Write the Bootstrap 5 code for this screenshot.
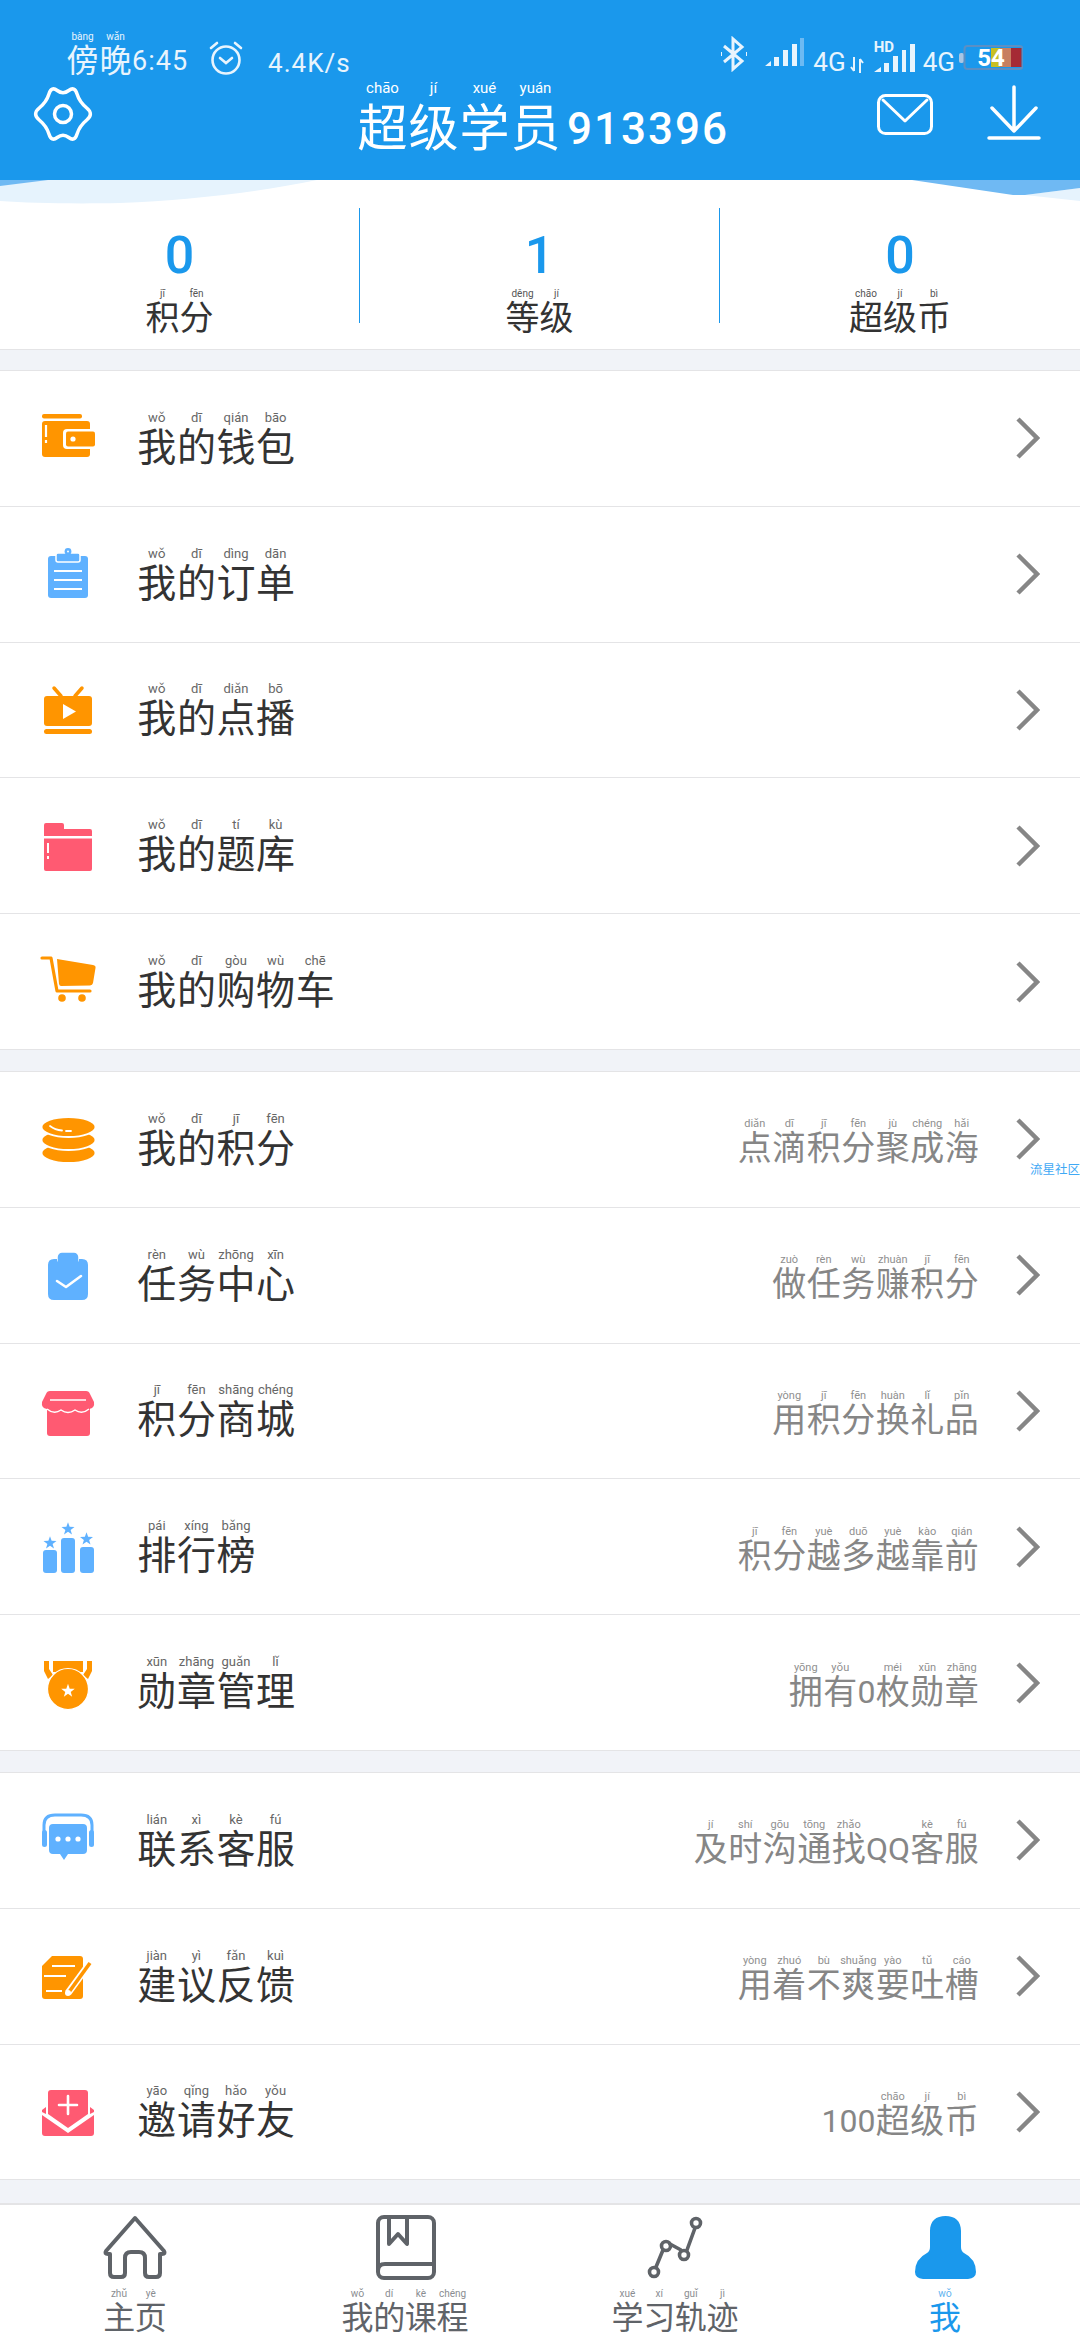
<!DOCTYPE html>
<html lang="zh">
<head>
  <meta charset="utf-8">
  <title>我的</title>
  <link rel="stylesheet" href="https://cdn.jsdelivr.net/npm/bootstrap@5.3.0/dist/css/bootstrap.min.css">
  <style>
    html { height: 2340px; overflow: hidden; }
    body { width: 1080px; height: 2340px; overflow: hidden; background: #f1f3f8; font-family: Roboto, "Noto Sans CJK SC", sans-serif; }

    /* pinyin cell: small reading above one character */
    .zi { display: inline-flex; flex-direction: column; align-items: center; vertical-align: top; }
    .zi-py { white-space: nowrap; font-weight: 400; }
    .zi-ch { display: block; white-space: nowrap; }

    .top-head { height: 180px; background: #1a98ec; color: #fff; }
    .status-line { height: 80px; padding: 32px 57px 0 66px; color: #e8f4fd; }
    .clock .zi { width: 33px; }
    .clock .zi-py { font-size: 10px; line-height: 12px; margin-top: -1px; }
    .clock .zi-ch { font-size: 32px; line-height: 36px; }
    .clock-num { font-size: 27px; letter-spacing: 1px; line-height: 36px; margin-top: 11px; }
    .alarm-ic { margin: 9px 0 0 20px; }
    .net-speed { font-size: 26px; letter-spacing: 1px; margin: 13px 0 0 24px; line-height: 36px; }
    .net-4g { font-size: 26px; line-height: 30px; margin-top: 15px; }
    .net-hd { font-size: 15px; font-weight: 700; line-height: 14px; position: absolute; left: 0; top: 8px; }

    .title-line { height: 100px; }
    .gear-ic { margin: 6px 0 0 33px; }
    .title-box { margin: 3px 0 0 264px; }
    .title-box .zi { width: 51px; }
    .title-box .zi-py { font-size: 15px; line-height: 16px; margin-top: -3px; }
    .title-box .zi-ch { font-size: 50px; line-height: 54px; margin-top: 6px; }
    .title-num { font-size: 44px; font-weight: 500; letter-spacing: 2px; line-height: 54px; margin: 19px 0 0 6px; }
    .mail-ic { margin: 14px 0 0 auto; }
    .down-ic { margin: 5px 39px 0 54px; }

    .stat-box { height: 170px; background: #fff; border-bottom: 1px solid #e4e4e6; padding-top: 28px; margin-bottom: 20px; }
    .wave-ic { position: absolute; left: 0; top: 0; }
    .stat-cell { height: 115px; }
    .stat-line { border-right: 1px solid #1a98ec; }
    .stat-num { color: #1a98ec; font-size: 52px; font-weight: 500; line-height: 66px; padding-top: 15px; }
    .stat-name { color: #333; }
    .stat-name .zi { width: 34px; }
    .stat-name .zi-py { font-size: 10px; line-height: 10px; color: #555; }
    .stat-name .zi-ch { font-size: 34px; line-height: 38px; }

    .menu-group { --bs-list-group-border-color: #e4e4e6; border-top: 1px solid #e4e4e6; margin-bottom: 21px; border-radius: 0; }
    .menu-group:last-child { margin-bottom: 23px; }
    .menu-line { height: 135.8px; padding: 0 40px 0 30px; background: #fff; }
    .menu-group .menu-line:last-child { border-bottom: 1px solid #e4e4e6; }
    .menu-name { color: #333; margin: 2px 0 0 27px; }
    .menu-name .zi { width: 39.6px; }
    .menu-name .zi-py { font-size: 13px; line-height: 14px; color: #666; }
    .menu-name .zi-ch { font-size: 39px; line-height: 40px; margin-top: 3px; }
    .menu-note { color: #868686; margin: 4px 37px 0 auto; }
    .menu-note .zi { width: 34.5px; }
    .menu-note .zi.zi-latin { width: auto; }
    .menu-note .zi-py { font-size: 11px; line-height: 14px; min-height: 14px; color: #8f8f8f; }
    .menu-note .zi-ch { font-size: 34px; line-height: 34px; }
    .menu-note .zi-latin .zi-ch { font-size: 32px; }
    .chev-ic { margin-left: auto; }
    .menu-note + .chev-ic { margin-left: 0; }
    .mark-text { position: absolute; right: 0; top: 90px; font-size: 12.5px; line-height: 16px; color: #3fa9f5; }

    .tab-strip { height: 137px; background: #fff; border-top: 2px solid #e4e4e6; padding-top: 8px; color: #5f6368; }
    .tab-strip .zi { width: 31.7px; }
    .tab-strip .zi-py { font-size: 10px; line-height: 10px; margin-top: 6px; color: #8a8d91; }
    .tab-strip .zi-ch { font-size: 32px; line-height: 38px; }
    .tab-on { color: #1a98ec; }
    .tab-on .zi-py { color: #5fb4ef; }
    .tab-ic { display: block; margin: 0 auto; }
  </style>
</head>
<body>
  <header class="top-head">
    <div class="status-line d-flex align-items-start">
      <div class="clock d-flex align-items-start">
        <span class="zi"><span class="zi-py">bàng</span><span class="zi-ch">傍</span></span><span class="zi"><span class="zi-py">wǎn</span><span class="zi-ch">晚</span></span>
        <span class="clock-num">6:45</span>
      </div>
      <svg class="alarm-ic" width="36" height="34" viewBox="0 0 36 34" fill="none" stroke="#e8f4fd" stroke-width="2.6" stroke-linecap="round">
        <circle cx="18" cy="19" r="13.5"/><path d="M3 7 9 2M33 7 27 2M12 17l6 5 6-5"/>
      </svg>
      <span class="net-speed">4.4K/s</span>
      <div class="d-flex align-items-start ms-auto">
        <svg class="mt-1" width="30" height="36" viewBox="0 0 30 36" fill="none" stroke="#e8f4fd" stroke-width="3"><path d="M5 10 23 25 14 33V3l9 8L5 26"/><path d="M2 18h1M27 18h1" stroke-width="4"/></svg>
        <svg class="ms-3" style="margin-top:5px" width="40" height="30" viewBox="0 0 40 30" fill="#e8f4fd"><path d="M0 29 6 24V29ZM9 20h5v9H9ZM18 13h5v16h-5ZM27 7h5v22h-5Z"/><path d="M35 1h4v28h-4Z" fill="#6cbaf3"/></svg>
        <span class="net-4g ms-2">4G</span>
        <svg class="mt-4 ms-1" width="14" height="18" viewBox="0 0 14 18" fill="none" stroke="#e8f4fd" stroke-width="2"><path d="M4 1V15M1 11l3 4M10 17V3M13 7l-3-4"/></svg>
        <div class="position-relative" style="width:51px;height:50px;margin-left:10px">
          <span class="net-hd">HD</span>
          <svg class="position-absolute start-0" style="top:11px" width="41" height="30" viewBox="0 0 41 30" fill="#e8f4fd"><path d="M0 29 7 24V29ZM10 20h5v9h-5ZM19 13h5v16h-5ZM28 7h4v22h-4ZM36 1h5v28h-5Z"/></svg>
        </div>
        <span class="net-4g" style="margin-left:-2px">4G</span>
        <svg style="margin:13px 0 0 4px" width="64" height="26" viewBox="0 0 64 26">
          <rect x="0" y="8" width="5" height="10" rx="2" fill="#a9c6e4"/>
          <rect x="5.5" y="1" width="58" height="23" rx="3" fill="#1a98ec" stroke="#5b8fc4" stroke-width="2"/>
          <rect x="32" y="3" width="9" height="19" fill="#c9bf22"/><rect x="41" y="3" width="11" height="19" fill="#c77f60"/><rect x="52" y="3" width="10.5" height="19" fill="#a52a35"/>
          <text x="32" y="21" text-anchor="middle" font-family="Roboto, sans-serif" font-weight="700" font-size="24" fill="#fff">54</text>
        </svg>
      </div>
    </div>
    <div class="title-line d-flex align-items-start">
      <svg class="gear-ic" width="60" height="56" viewBox="0 0 60 56" fill="none" stroke="#fff" stroke-width="3.5">
        <path d="M53.75 34Q61 28 53.75 22Q46.500 16 44.05 8Q41.6 0 35.8 4.500Q30 9 24.2 4.500Q18.4 0 15.95 8Q13.500 16 6.25 22Q-1 28 6.25 34Q13.500 40 15.95 48Q18.4 56 24.2 51.500Q30 47 35.8 51.500Q41.6 56 44.05 48Q46.500 40 53.75 34Z"/>
        <circle cx="30" cy="28" r="8.5"/>
      </svg>
      <div class="title-box d-flex align-items-start" id="titleBox"></div>
      <svg class="mail-ic" width="56" height="41" viewBox="0 0 56 41" fill="none" stroke="#fff" stroke-width="3" stroke-linecap="round" stroke-linejoin="round">
        <rect x="1.5" y="1.5" width="53" height="38" rx="7"/><path d="M6 6 28 27 50 6"/>
      </svg>
      <svg class="down-ic" width="54" height="56" viewBox="0 0 54 56" fill="none" stroke="#fff" stroke-width="3.5" stroke-linecap="round" stroke-linejoin="round">
        <path d="M27 2V46M5 23 27 46 49 23"/><path d="M2 53H52"/>
      </svg>
    </div>
  </header>

  <section class="stat-box position-relative">
    <svg class="wave-ic" width="1080" height="30" viewBox="0 0 1080 30">
      <path d="M0 0H317C260 12 190 20 120 23 70 24 30 23 0 21Z" fill="#e6f3fd"/>
      <path d="M0 0H48L0 6Z" fill="#6fb9f3"/>
      <path d="M1025 15 1080 8V21Z" fill="#e6f3fd"/>
      <path d="M912 0 1013 15H1025L1080 8V0Z" fill="#6fb9f3"/>
    </svg>
    <div class="row g-0 text-center" id="stats"></div>
  </section>

  <div id="menus"></div>

  <nav class="tab-strip row g-0 text-center" id="tabs"></nav>

  <script>
    const orange = "#ff9500", blue = "#5fb1ff", red = "#ff5a72";

    const star = "0,-5.5 1.3,-1.8 5.2,-1.7 2.1,.7 3.2,4.4 0,2.2 -3.2,4.4 -2.1,.7 -5.2,-1.7 -1.3,-1.8";

    const icons = {
      wallet: `<g fill="${orange}"><rect x="12" y="16" width="40" height="4.5" rx="2"/><rect x="12" y="23" width="48" height="36" rx="3"/></g>
        <rect x="33" y="31" width="33" height="20" rx="4" fill="#fff"/><rect x="36" y="33.5" width="29" height="15" rx="2" fill="${orange}"/>
        <circle cx="43" cy="41" r="2.6" fill="#fff"/><path d="M16 27V39M16 42V45" stroke="#fff" stroke-width="2.2"/>`,
      clipboard: `<rect x="18" y="22" width="40" height="42" rx="3" fill="${blue}"/><rect x="26" y="19" width="24" height="9" rx="2" fill="${blue}" stroke="#fff" stroke-width="1.5"/>
        <circle cx="38" cy="17.5" r="3.4" fill="${blue}"/><circle cx="38" cy="17.5" r="1" fill="#fff"/>
        <path d="M24 37H52M24 46H52M24 55H52" stroke="#fff" stroke-width="2"/>`,
      tv: `<path d="M24 18 31 26M52 18 45 26" stroke="${orange}" stroke-width="3.5" stroke-linecap="round"/><rect x="14" y="26" width="48" height="30" rx="3" fill="${orange}"/>
        <rect x="14" y="59" width="48" height="5" rx="2.5" fill="${orange}"/><path d="M33 34 46 41.5 33 49Z" fill="#fff"/>`,
      folder: `<path d="M14 30V19q0-2 2-2h16q2 0 2 2v4h26q2 0 2 2v5Z" fill="${red}"/><path d="M14 32.5H62V63q0 2-2 2H16q-2 0-2-2Z" fill="${red}"/>
        <path d="M18 37V47M18 50V53" stroke="#fff" stroke-width="2"/>`,
      cart: `<path d="M12 16H21L27 49H60" fill="none" stroke="${orange}" stroke-width="3.2" stroke-linecap="round" stroke-linejoin="round"/>
        <path d="M27 17 63 23q3 .5 2.5 3L63 41q-.5 2-3 2.5L31 44q-1.5 0-2-2Z" fill="${orange}"/>
        <circle cx="32" cy="56" r="3.8" fill="${orange}"/><circle cx="52" cy="56" r="3.8" fill="${orange}"/>`,
      coins: `<g fill="${orange}" stroke="#fff" stroke-width="1.8"><ellipse cx="38.5" cy="54" rx="27" ry="10"/><ellipse cx="38.5" cy="41" rx="27" ry="10"/><ellipse cx="38.5" cy="28" rx="27" ry="10"/></g>
        <path d="M20 27Q25 31 32 31.5M36 32H41" fill="none" stroke="#fff" stroke-width="1.8" stroke-linecap="round"/>`,
      task: `<rect x="27" y="17" width="22" height="14" rx="5" fill="${blue}" stroke="#fff" stroke-width="1.5"/><path d="M18 30q0-6 6-6h3v1q0 2 2 2h18q2 0 2-2v-1h3q6 0 6 6v29q0 6-6 6H24q-6 0-6-6Z" fill="${blue}"/>
        <path d="M27 46 36 52 51 41" fill="none" stroke="#fff" stroke-width="2.6" stroke-linecap="round" stroke-linejoin="round"/>`,
      shop: `<path d="M17 36H60V62q0 3-3 3H20q-3 0-3-3Z" fill="${red}"/><path d="M20 20H56q3 0 4 3L64 31q1 6-5 7-6 1-9-2-5 4-12 2-7 2-12-2-3 3-9 2-6-1-5-7L16 23q1-3 4-3Z" fill="${red}"/>
        <path d="M20 29H56" stroke="#fff" stroke-width="1.6"/><path d="M17 38q7 6 14 1 7 5 14 0 7 5 14-1" fill="none" stroke="#fff" stroke-width="1.5"/>`,
      rank: `<g fill="${blue}"><rect x="13" y="43" width="14" height="23" rx="3"/><rect x="31" y="31" width="14" height="35" rx="3"/><rect x="50" y="40" width="14" height="26" rx="3"/>
        <polygon points="${star}" transform="translate(20 36) scale(1.25)"/><polygon points="${star}" transform="translate(38 22) scale(1.25)"/><polygon points="${star}" transform="translate(56.5 32) scale(1.25)"/></g>`,
      medal: `<path d="M14 18H19V26L23 32 18 36 14 28ZM62 18H57V26L53 32 58 36 62 28ZM23 18H53V29H23Z" fill="${orange}"/><circle cx="38" cy="46" r="20.5" fill="${orange}" stroke="#fff" stroke-width="1.2"/>
        <polygon points="${star}" transform="translate(38 48) scale(1.3)" fill="#fff"/>`,
      service: `<path d="M14 32V25q0-10 11-10H51q11 0 11 10v7" fill="none" stroke="${blue}" stroke-width="3"/><rect x="12" y="30" width="5" height="17" rx="2.5" fill="${blue}"/><rect x="59" y="30" width="5" height="17" rx="2.5" fill="${blue}"/>
        <path d="M23 24H53q4 0 4 4V50q0 4-4 4H38L34 60 30 54H23q-4 0-4-4V28q0-4 4-4Z" fill="${blue}"/><g fill="#fff"><circle cx="28" cy="39" r="2.6"/><circle cx="38" cy="39" r="2.6"/><circle cx="48" cy="39" r="2.6"/></g>`,
      feedback: `<path d="M22 20H50q3 0 3 3V60q0 3-3 3H15q-3 0-3-3V30Z" fill="${orange}"/><path d="M22 30H45M14 40H36M16 55H32" stroke="#fff" stroke-width="2"/>
        <path d="M38 57 60 27" stroke="#fff" stroke-width="7"/><path d="M39 56 60 27" stroke="${orange}" stroke-width="3.6"/><circle cx="38" cy="57" r="3" fill="#fff"/>`,
      invite: `<path d="M18 42V21q0-3 3-3H55q3 0 3 3V42L38 56Z" fill="${red}"/><path d="M12 38 16 35V42L12 40ZM64 38 60 35V42L64 40Z" fill="${red}"/>
        <path d="M12 43 38 61 64 43V61q0 3-3 3H15q-3 0-3-3Z" fill="${red}"/><path d="M38 24V42M29 33H47" stroke="#fff" stroke-width="2.6" stroke-linecap="round"/>`
    };

    const groups = [
      [
        ["wallet", "我的钱包", "wǒ dī qián bāo"],
        ["clipboard", "我的订单", "wǒ dī dìng dān"],
        ["tv", "我的点播", "wǒ dī diǎn bō"],
        ["folder", "我的题库", "wǒ dī tí kù"],
        ["cart", "我的购物车", "wǒ dī gòu wù chē"]
      ],
      [
        ["coins", "我的积分", "wǒ dī jī fēn", "点滴积分聚成海", "diǎn dī jī fēn jù chéng hǎi", "流星社区"],
        ["task", "任务中心", "rèn wù zhōng xīn", "做任务赚积分", "zuò rèn wù zhuàn jī fēn"],
        ["shop", "积分商城", "jī fēn shāng chéng", "用积分换礼品", "yòng jī fēn huàn lǐ pǐn"],
        ["rank", "排行榜", "pái xíng bǎng", "积分越多越靠前", "jī fēn yuè duō yuè kào qián"],
        ["medal", "勋章管理", "xūn zhāng guǎn lǐ", "拥有0枚勋章", "yōng yǒu méi xūn zhāng"]
      ],
      [
        ["service", "联系客服", "lián xì kè fú", "及时沟通找QQ客服", "jí shí gōu tōng zhǎo kè fú"],
        ["feedback", "建议反馈", "jiàn yì fǎn kuì", "用着不爽要吐槽", "yòng zhuó bù shuǎng yào tǔ cáo"],
        ["invite", "邀请好友", "yāo qǐng hǎo yǒu", "100超级币", "chāo jí bì"]
      ]
    ];

    // one cell per Chinese character, latin runs get a cell with no reading
    function ruby(text, pinyin) {
      const py = pinyin.split(" ");
      return text.match(/[A-Za-z0-9]+|./g).map(part => /^[A-Za-z0-9]/.test(part)
        ? `<span class="zi zi-latin"><span class="zi-py"></span><span class="zi-ch">${part}</span></span>`
        : `<span class="zi"><span class="zi-py">${py.shift()}</span><span class="zi-ch">${part}</span></span>`).join("");
    }

    const chevron = `<svg class="chev-ic" width="24" height="42" viewBox="0 0 24 42" fill="none" stroke="#868686" stroke-width="4.5"><path d="M2 2 21 21 2 40"/></svg>`;

    document.getElementById("titleBox").innerHTML =
      ruby("超级学员", "chāo jí xué yuán") + `<span class="title-num">913396</span>`;

    document.getElementById("stats").innerHTML = [
      ["0", "积分", "jī fēn", true],
      ["1", "等级", "děng jí", true],
      ["0", "超级币", "chāo jí bì", false]
    ].map(s => `
      <div class="col-4">
        <div class="stat-cell ${s[3] ? "stat-line" : ""}">
          <div class="stat-num">${s[0]}</div>
          <div class="stat-name">${ruby(s[1], s[2])}</div>
        </div>
      </div>`).join("");

    document.getElementById("menus").innerHTML = groups.map(group => `
      <ul class="list-group list-group-flush menu-group">
        ${group.map(m => `
          <li class="list-group-item d-flex align-items-center menu-line">
            <svg width="80" height="80" viewBox="0 0 80 80" class="flex-shrink-0">${icons[m[0]]}</svg>
            <div class="menu-name">${ruby(m[1], m[2])}</div>
            ${m[3] ? `<div class="menu-note">${ruby(m[3], m[4])}</div>` : ""}
            ${chevron}
            ${m[5] ? `<span class="mark-text">${m[5]}</span>` : ""}
          </li>`).join("")}
      </ul>`).join("");

    const tabIcons = [
      `<path d="M35 5 64 38q2 3-2 3h-2V60q0 4-4 4H49q-4 0-4-4V45q0-6-6-6H31q-6 0-6 6V60q0 4-4 4H14q-4 0-4-4V41H8q-4 0-2-3Z" fill="none" stroke="#5f6368" stroke-width="4" stroke-linejoin="round"/>`,
      `<g fill="none" stroke="#5f6368" stroke-width="4" stroke-linejoin="round"><rect x="8" y="4" width="56" height="61" rx="6"/><path d="M8 58q0-7 7-7H64"/><path d="M19 4V31L28 21 37 31V4"/></g>`,
      `<g fill="none" stroke="#5f6368" stroke-width="3.6"><path d="M55 15 47 37M41 37 30 31M23 37 16 54" stroke-linecap="round"/><circle cx="56" cy="10" r="4.5"/><circle cx="26" cy="33" r="4.5"/><circle cx="44" cy="42" r="4.5"/><circle cx="14" cy="59" r="4.5"/></g>`,
      `<path d="M20 18C20 8 26 3 35.500 3S51 8 51 18V34q0 4 3 6 12 6 12 19 0 6-8 7H13q-8-1-8-7 0-13 12-19 3-2 3-6Z" fill="#1a98ec"/>`
    ];

    document.getElementById("tabs").innerHTML = [
      ["主页", "zhǔ yè"],
      ["我的课程", "wǒ dí kè chéng"],
      ["学习轨迹", "xué xí guǐ jì"],
      ["我", "wǒ"]
    ].map((t, i) => `
      <div class="col-3 ${i == 3 ? "tab-on" : ""}">
        <svg class="tab-ic" width="70" height="70" viewBox="0 0 70 70">${tabIcons[i]}</svg>
        ${ruby(t[0], t[1])}
      </div>`).join("");
  </script>
  <script src="https://cdn.jsdelivr.net/npm/bootstrap@5.3.0/dist/js/bootstrap.bundle.min.js"></script>
</body>
</html>
